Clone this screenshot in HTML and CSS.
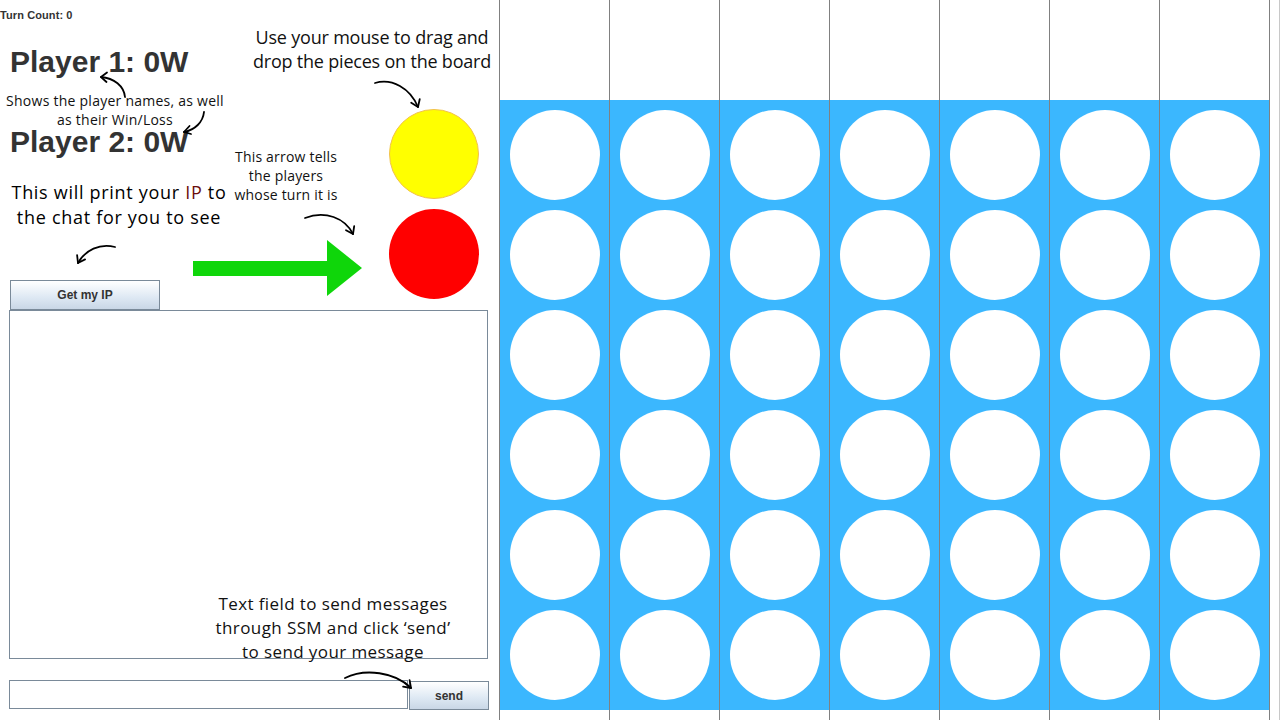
FILE: index.html
```html
<!DOCTYPE html>
<html>
<head>
<meta charset="utf-8">
<link rel="stylesheet" href="styles.css">
</head>
<body>
<div class="app">
  <div class="left">
    <div class="turn">Turn Count: 0</div>
    <div class="top">
      <div class="players">
        <div class="player p1">Player 1: 0W</div>
        <div class="player p2">Player 2: 0W</div>
      </div>
      <div class="pieces">
        <div class="piece yellow"></div>
        <svg class="turn-arrow" width="169" height="56" viewBox="0 0 169 56">
          <polygon points="0,21 134,21 134,0 169,28 134,56 134,36 0,36" fill="#0fd60a"/>
        </svg>
        <div class="piece red"></div>
      </div>
    </div>
    <div class="ip-row"><button class="btn ip">Get my IP</button></div>
    <div class="chat"></div>
    <div class="send-row"><div class="field"></div><button class="btn send">send</button></div>

    <div class="note n-players">Shows the player names, as well<br>as their Win/Loss</div>
    <div class="note n-mouse">Use your mouse to drag and<br>drop the pieces on the board</div>
    <div class="note n-arrow">This arrow tells<br>the players<br>whose turn it is</div>
    <div class="note n-ip">This will print your <span class="ipword">IP</span> to<br>the chat for you to see</div>
    <div class="note n-send">Text field to send messages<br>through SSM and click ‘send’<br>to send your message</div>
    <svg class="note-arrows" width="499" height="720" viewBox="0 0 499 720">
      <g fill="none" stroke="#000" stroke-width="1.8" stroke-linecap="round" stroke-linejoin="round">
        <path d="M125,97 C124,86 114,78 101,77"/>
        <path d="M107,72.5 L101,77 L106.5,82"/>
        <path d="M204,112 C203,122 195,130 184,132"/>
        <path d="M189.5,126 L184,132 L191,134"/>
        <path d="M375,83 C392,78 410,88 418,107"/>
        <path d="M411.2,102.8 L418,107 L419.7,99.2"/>
        <path d="M305,218 C325,210 345,218 353,234"/>
        <path d="M346,230.2 L353,234 L354.2,226.1"/>
        <path d="M115,247 C100,243 85,250 78,263"/>
        <path d="M85.1,259.4 L78,263 L77.1,255.1"/>
        <path d="M345,678 C365,668 395,672 411,688"/>
        <path d="M409.6,680.1 L411,688 L403.1,686.6"/>
      </g>
    </svg>
  </div>
  <div class="board">
    <div class="col"><div class="slots"><div class="cell"></div><div class="cell"></div><div class="cell"></div><div class="cell"></div><div class="cell"></div><div class="cell"></div></div></div>
    <div class="col"><div class="slots"><div class="cell"></div><div class="cell"></div><div class="cell"></div><div class="cell"></div><div class="cell"></div><div class="cell"></div></div></div>
    <div class="col"><div class="slots"><div class="cell"></div><div class="cell"></div><div class="cell"></div><div class="cell"></div><div class="cell"></div><div class="cell"></div></div></div>
    <div class="col"><div class="slots"><div class="cell"></div><div class="cell"></div><div class="cell"></div><div class="cell"></div><div class="cell"></div><div class="cell"></div></div></div>
    <div class="col"><div class="slots"><div class="cell"></div><div class="cell"></div><div class="cell"></div><div class="cell"></div><div class="cell"></div><div class="cell"></div></div></div>
    <div class="col"><div class="slots"><div class="cell"></div><div class="cell"></div><div class="cell"></div><div class="cell"></div><div class="cell"></div><div class="cell"></div></div></div>
    <div class="col last"><div class="slots"><div class="cell"></div><div class="cell"></div><div class="cell"></div><div class="cell"></div><div class="cell"></div><div class="cell"></div></div></div>
    <div class="edge"></div>
  </div>
</div>
</body>
</html>
```

FILE: styles.css
```css
* { box-sizing: border-box; }
html, body { margin: 0; padding: 0; background: #fff; }
body { width: 1280px; height: 720px; overflow: hidden; font-family: "Liberation Sans", Arial, sans-serif; }

.app { display: flex; width: 1280px; height: 720px; }

.left { position: relative; width: 499px; height: 720px; flex: none; }

.turn { height: 32px; padding-top: 9px; font-size: 11px; line-height: 13px; font-weight: bold; color: #333; letter-spacing: 0.1px; }

.top { display: flex; height: 248px; }
.players { width: 193px; padding-left: 10px; }
.player { font-size: 30px; line-height: 34px; font-weight: bold; color: #333; white-space: nowrap; }
.p1 { margin-top: 13px; }
.p2 { margin-top: 46px; }

.pieces { display: grid; grid-template-columns: 169px 90px; column-gap: 27px; row-gap: 10px; padding-top: 77px; align-content: start; }
.piece { width: 90px; height: 90px; border-radius: 50%; }
.yellow { grid-column: 2; grid-row: 1; background: #ffff00; border: 1px solid #f2c14e; }
.red { grid-column: 2; grid-row: 2; background: #ff0000; }
.turn-arrow { grid-column: 1; grid-row: 2; margin-top: 31px; display: block; }

.ip-row { height: 30px; padding-left: 10px; }
.btn { display: block; margin: 0; padding: 0; border: 1px solid #7a8a99; background: linear-gradient(#ffffff, #dde8f3 60%, #c9d7e6); font-family: "Liberation Sans", Arial, sans-serif; font-weight: bold; font-size: 12px; color: #333; }
.ip { width: 150px; height: 30px; }

.chat { margin-left: 9px; width: 479px; height: 349px; border: 1px solid #7a8a99; }

.send-row { display: flex; margin-top: 21px; padding-left: 9px; }
.field { width: 399px; height: 29px; border: 1px solid #7a8a99; }
.send { width: 80px; height: 29px; margin-left: 1px; margin-top: 1px; }

.note { position: absolute; text-align: center; font-family: "Open Sans", sans-serif; color: #111; white-space: nowrap; }
.n-players { left: 0; width: 230px; top: 91px; font-size: 14px; line-height: 19px; letter-spacing: 0.25px; }
.n-mouse { left: 232px; width: 280px; top: 25px; font-size: 18px; line-height: 24px; letter-spacing: -0.2px; }
.n-arrow { left: 206px; width: 160px; top: 147px; font-size: 14px; line-height: 19px; letter-spacing: 0.2px; }
.n-ip { left: 0; width: 238px; top: 180px; font-size: 18px; line-height: 25px; letter-spacing: 0.7px; color: #000; }
.ipword { color: #6b0d0d; }
.n-send { left: 193px; width: 280px; top: 592px; font-size: 17px; line-height: 24px; letter-spacing: 0.4px; }
.note-arrows { position: absolute; left: 0; top: 0; pointer-events: none; }

.board { display: flex; height: 720px; flex: none; width: 781px; }
.col { width: 110px; height: 720px; border-left: 1px solid #808080; padding-top: 100px; }
.col.last { width: 111px; border-right: 1px solid #808080; }
.slots { background: #3bb7fe; height: 610px; padding-bottom: 10px; }
.cell { height: 100px; padding: 10px 0 0 10px; }
.cell::before { content: ""; display: block; width: 90px; height: 90px; border-radius: 50%; background: #fff; }
.edge { width: 10px; height: 720px; border-right: 1px solid #c8c8c8; }
```
